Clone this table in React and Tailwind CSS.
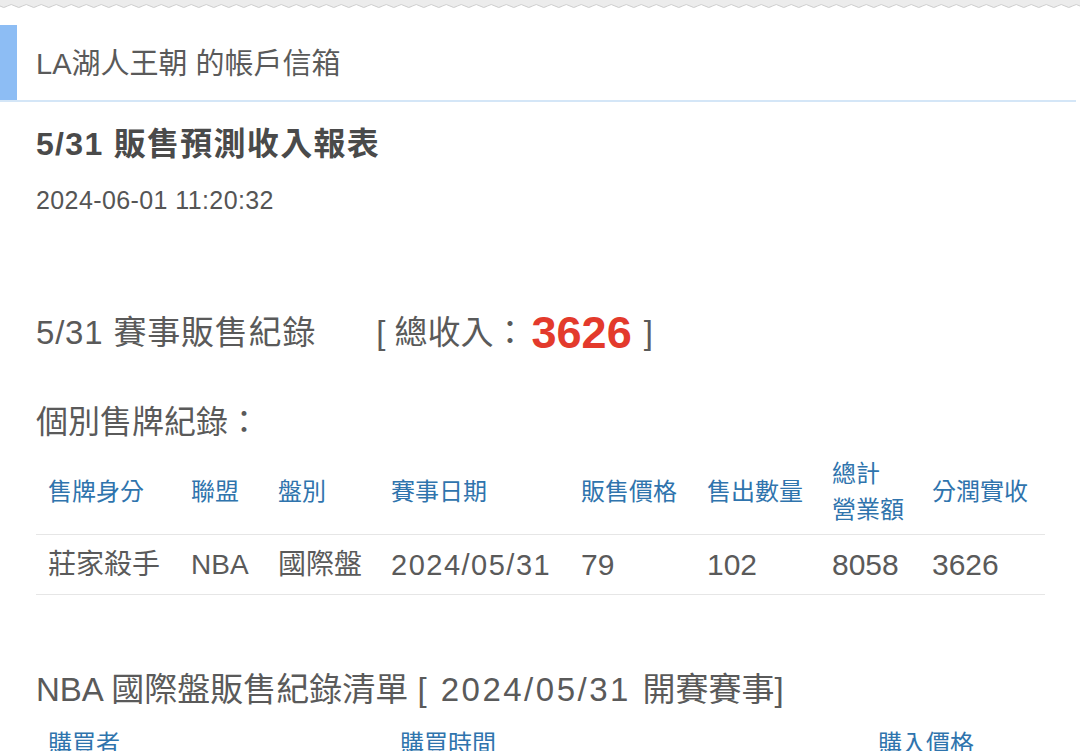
import React from "react";

const font = { fontFamily: '"Liberation Sans", "Noto Sans CJK TC", sans-serif' };

function Wave() {
  return (
    <svg width="1080" height="10" className="block" aria-hidden="true">
      <defs>
        <pattern id="wv" width="15" height="10" patternUnits="userSpaceOnUse">
          <path d="M0 0 H15 V6 Q11.25 3 7.5 6 Q3.75 9 0 6 Z" fill="#ececec" />
          <path d="M0 6 Q3.75 9 7.5 6 Q11.25 3 15 6" fill="none" stroke="#cdcdcd" strokeWidth="1" />
        </pattern>
      </defs>
      <rect x="0" y="0" width="1080" height="10" fill="url(#wv)" />
    </svg>
  );
}

const cols = [
  { w: "w-[143px]", h: "售牌身分", d: "莊家殺手", ds: "text-[28px]" },
  { w: "w-[87px]", h: "聯盟", d: "NBA", ds: "text-[28px]" },
  { w: "w-[113px]", h: "盤別", d: "國際盤", ds: "text-[28px]" },
  { w: "w-[190px]", h: "賽事日期", d: "2024/05/31", ds: "text-[29px] tracking-[1.5px]" },
  { w: "w-[126px]", h: "販售價格", d: "79", ds: "text-[30px]" },
  { w: "w-[125px]", h: "售出數量", d: "102", ds: "text-[30px]" },
  { w: "w-[100px]", h: ["總計", "營業額"], d: "8058", ds: "text-[30px]" },
  { w: "w-[125px]", h: "分潤實收", d: "3626", ds: "text-[30px]" },
];

export default function App() {
  return (
    <div className="w-[1080px] h-[751px] overflow-hidden bg-white text-[#5a5a5a]" style={font}>
      <Wave />
      <div className="mt-[15px] flex h-[77px] border-b-2 border-[#d4e6f7] mr-[4px]">
        <div className="w-[17px] bg-[#8dbdf4]" />
        <div className="flex items-center pl-[19px] pt-[4px] text-[29px] text-[#5a5a5a]">LA湖人王朝 的帳戶信箱</div>
      </div>
      <div className="pl-[36px]">
        <div className="mt-[22px] text-[32px] font-bold text-[#4a4a4a] leading-[40px] tracking-[1.3px]">5/31 販售預測收入報表</div>
        <div className="mt-[24px] text-[25px] leading-[24px] tracking-[0.4px] text-[#555]">2024-06-01 11:20:32</div>
        <div className="mt-[97px] flex items-center text-[33px] leading-[48px]">
          <span className="tracking-[0.8px]">5/31 賽事販售紀錄</span>
          <span className="ml-[60px]">[ 總收入：</span>
          <span className="ml-[5px] text-[45px] font-bold text-[#e33a2c]">3626</span>
          <span className="ml-[12px]">]</span>
        </div>
        <div className="mt-[41px] text-[32px] leading-[48px]">個別售牌紀錄：</div>
        <div className="mt-[3px] w-[1009px]">
          <div className="flex h-[86px] items-center border-b border-[#e6e6e6]">
            {cols.map((c, i) => (
              <div key={i} className={`${c.w} px-[12px] text-[24px] leading-[32px] text-[#2f74ad]`}>
                {Array.isArray(c.h) ? (
                  <div className="flex flex-col leading-[36px]">
                    <span>{c.h[0]}</span>
                    <span>{c.h[1]}</span>
                  </div>
                ) : (
                  c.h
                )}
              </div>
            ))}
          </div>
          <div className="flex h-[60px] items-center border-b border-[#e6e6e6]">
            {cols.map((c, i) => (
              <div key={i} className={`${c.w} px-[12px] ${c.ds} leading-[32px] whitespace-nowrap`}>{c.d}</div>
            ))}
          </div>
        </div>
        <div className="mt-[71px] text-[33px] leading-[48px] whitespace-nowrap">
          NBA 國際盤販售紀錄清單 <span className="tracking-[2.5px]">[ 2024/05/31 </span>開賽賽事]
        </div>
        <div className="mt-[14px] flex text-[24px] leading-[32px] text-[#2f74ad]">
          <div className="w-[364px] pl-[12px]">購買者</div>
          <div className="w-[478px]">購買時間</div>
          <div>購入價格</div>
        </div>
      </div>
    </div>
  );
}
